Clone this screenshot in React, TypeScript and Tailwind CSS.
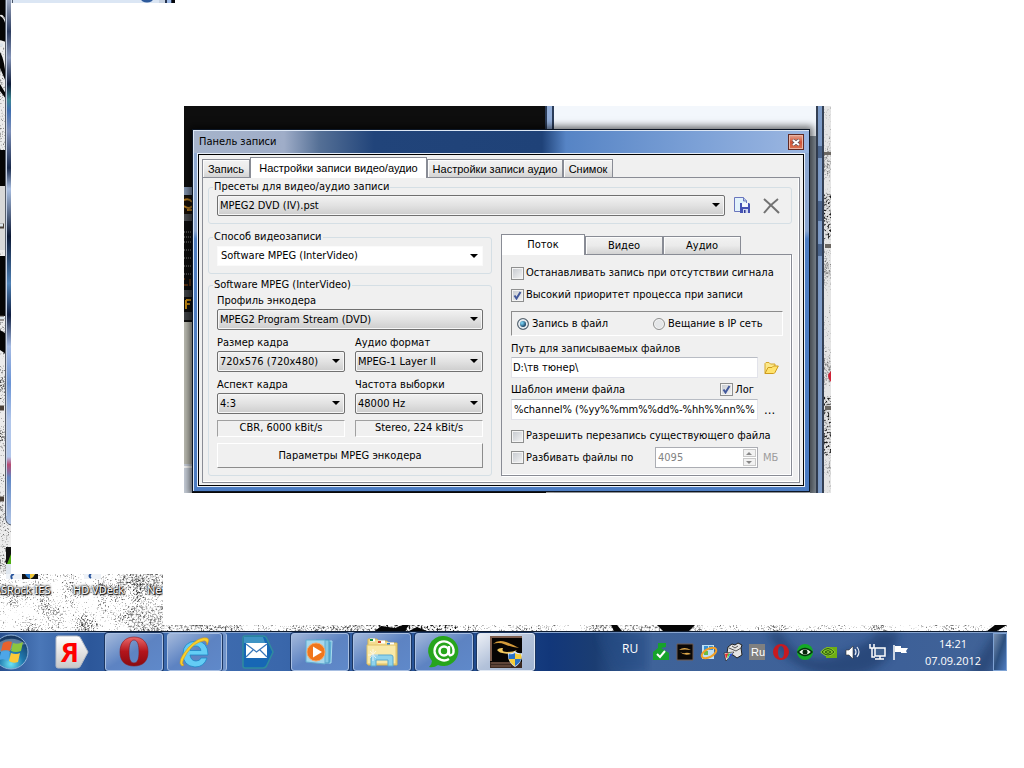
import { useState } from "react";
import type { ReactNode } from "react";

const uiFont = "font-['DejaVu_Sans_Condensed','DejaVu_Sans',sans-serif]";

/* ---------- Wallpaper ---------- */

function SpeckleFilters() {
  return (
    <svg className="absolute h-0 w-0" aria-hidden="true">
      <defs>
        <filter id="light-speckle" x="0" y="0" width="100%" height="100%" colorInterpolationFilters="sRGB">
          <feTurbulence type="fractalNoise" baseFrequency="0.6" numOctaves="2" seed="4" />
          <feColorMatrix values="1 0 0 0 0  1 0 0 0 0  1 0 0 0 0  0 0 0 0 1" result="fine" />
          <feTurbulence type="fractalNoise" baseFrequency="0.04" numOctaves="2" seed="7" />
          <feColorMatrix values="1 0 0 0 0  1 0 0 0 0  1 0 0 0 0  0 0 0 0 1" result="coarse" />
          <feComposite in="fine" in2="coarse" operator="arithmetic" k1="0" k2="0.6" k3="0.4" k4="0" />
          <feColorMatrix values="0 0 0 0 0.2  0 0 0 0 0.2  0 0 0 0 0.2  -4.5 0 0 0 2.1" />
        </filter>
        <filter id="dense-speckle" x="0" y="0" width="100%" height="100%" colorInterpolationFilters="sRGB">
          <feTurbulence type="fractalNoise" baseFrequency="0.5" numOctaves="3" seed="9" />
          <feColorMatrix values="0 0 0 0 0.1  0 0 0 0 0.1  0 0 0 0 0.1  -4 0 0 0 2.1" />
        </filter>
      </defs>
    </svg>
  );
}

function Wallpaper() {
  return (
    <>
      <svg className="absolute top-0 left-0" width="11" height="574" aria-hidden="true">
        <rect width="11" height="574" fill="#ececec" />
        <rect width="11" height="574" filter="url(#light-speckle)" />
        <path d="M0 0h6v20q-3-6-6-5zM0 16q5 2 6 12v14l-6-2zM0 52q5 8 6 30l-6-14zM0 84l6 10v5l-6-8zM0 150h6v36H0zM0 256h6v60H0zM0 330l6 4v20l-6-4z" fill="#050505" />
        <path d="M0 186h5v64H0z" fill="#d8d8d8" />
        <path d="M0 226h4M0 318h4M0 408h4M0 499h4" stroke="#4a4038" strokeWidth="5" />
        <path d="M0 45h3M0 225h3M0 318h4" stroke="#dce4ea" strokeWidth="3" />
        <defs>
          <linearGradient id="frame-glass" x1="0" y1="0" x2="0" y2="1">
            <stop offset="0" stopColor="#9aa6bf" />
            <stop offset=".06" stopColor="#2b3b5e" />
            <stop offset=".11" stopColor="#8494b8" />
            <stop offset=".16" stopColor="#0c1a38" />
            <stop offset=".19" stopColor="#3c8793" />
            <stop offset=".21" stopColor="#3d6cae" />
            <stop offset=".25" stopColor="#7d90ba" />
            <stop offset=".32" stopColor="#17284a" />
            <stop offset=".36" stopColor="#a9bfe2" />
            <stop offset=".45" stopColor="#0a1734" />
            <stop offset=".54" stopColor="#4d80b4" />
            <stop offset=".6" stopColor="#0e1d40" />
            <stop offset=".66" stopColor="#a5bbe4" />
            <stop offset=".73" stopColor="#6a93d4" />
            <stop offset=".8" stopColor="#b1c6ea" />
            <stop offset=".87" stopColor="#b1c6ea" />
            <stop offset=".885" stopColor="#b84a72" />
            <stop offset=".91" stopColor="#5f86c4" />
            <stop offset="1" stopColor="#b4c7e6" />
          </linearGradient>
        </defs>
        <path d="M5.500 0H11V525Q6 524 5.500 518Z" fill="url(#frame-glass)" />
        <path d="M5.500 0V518Q6 524 11 525" fill="none" stroke="#555c68" />
        <path d="M6.500 0V516" stroke="#c8d2e4" />
        <rect x="6" y="547" width="5" height="27" fill="#111" />
        <path d="M7 564l4-10v10z" fill="#4fae12" />
        <path d="M6 564h5v10H6z" fill="#dfe6ee" />
      </svg>

      <svg className="absolute top-0 left-[11px]" width="164" height="3" aria-hidden="true">
        <rect width="164" height="3" fill="#dbe6f4" />
        <rect x="1" width="1" height="3" fill="#4b5668" />
        <rect x="148" width="6" height="3" fill="#c9d4e3" />
        <ellipse cx="136" cy="-1" rx="6" ry="3.500" fill="#2e5a9b" />
        <rect x="154" width="8" height="3" fill="#26344f" />
        <rect x="156" width="4" height="3" fill="#a0bdea" />
        <rect x="161" width="3" height="3" fill="#05080c" />
      </svg>

      <svg className="absolute top-[574px] left-0" width="163" height="57" aria-hidden="true">
        <rect width="163" height="57" fill="#fff" />
        <rect width="163" height="57" filter="url(#light-speckle)" />
        <svg x="118" width="45" height="16"><rect width="45" height="16" filter="url(#dense-speckle)" opacity=".6" /></svg>
        <svg x="128" y="32" width="35" height="25"><rect width="35" height="25" filter="url(#dense-speckle)" opacity=".5" /></svg>
        <path d="M6 0h32v5H6zM84 0h17v5H84z" fill="#eef2f7" />
        <path d="M14 0q-4 1-2 5M91 0q-3 2 0 4" fill="none" stroke="#27539b" strokeWidth="2" />
        <rect x="22" width="16" height="5" fill="#111" />
        <path d="M25 0h10q-1 3-5 5-4-2-5-5z" fill="#2673c5" />
        <path d="M30 0h5q-1 3-5 5z" fill="#f2c838" />
      </svg>

      <div className="absolute top-[583px] left-0 h-4 w-[163px] overflow-hidden font-['Noto_Sans',sans-serif] text-[11px] leading-[14px] whitespace-nowrap text-white [text-shadow:0_0_2px_#000,1px_1px_1px_#000,0_0_3px_#000]">
        <span className="absolute top-0 -left-[6px]">ASRock IES</span>
        <span className="absolute top-0 left-[73px]">HD VDeck</span>
        <span className="absolute top-0 left-[147px]">Net</span>
      </div>

      <div className="absolute top-[625px] right-[17px] left-[163px] h-[6px] overflow-hidden">
        <svg width="100%" height="6" aria-hidden="true">
          <rect width="100%" height="6" fill="#fff" />
          <rect width="100%" height="6" filter="url(#light-speckle)" />
          <rect width="80" height="6" filter="url(#dense-speckle)" opacity=".7" />
          <rect x="150" width="90" height="6" filter="url(#dense-speckle)" opacity=".7" />
          <rect x="215" width="80" height="6" filter="url(#dense-speckle)" />
          <rect x="430" width="110" height="6" filter="url(#dense-speckle)" opacity=".6" />
          <path d="M212 6l6-5 14 2 8-3h6l-4 6zM246 6l8-4 10 4zM448 0h6l5 6h-8zM494 0h38l-6 6h-26zM668 0h12l-6 6h-12z" transform="translate(159 0)" opacity="0" />
          <path d="M212 6l6-5 14 2 8-3h6l-4 6zM246 6l8-4 10 4zM448 0h6l5 6h-8zM494 0h38l-6 6h-26zM832 0h12l-10 6h-10z" fill="#060606" />
        </svg>
      </div>
    </>
  );
}

/* ---------- Form parts ---------- */

type ComboProps = { id: string; label?: string; value: string; flat?: boolean; className?: string };

function Combo({ id, label, value, flat, className = "" }: ComboProps) {
  const skin = flat
    ? "h-5 border-[#fafafa] bg-white pl-[3px]"
    : "h-[21px] rounded-[2px] border-[#707070] bg-linear-to-b from-[#f2f2f2] via-[#e2e2e2] via-50% to-[#cdcdcd] pl-[2px] shadow-[inset_0_0_0_1px_#f6f6f6]";
  return (
    <div className={`relative ${className}`}>
      <select id={id} aria-label={label} className={`block w-full appearance-none border pr-5 outline-none ${skin}`}>
        <option>{value}</option>
      </select>
      <svg className="pointer-events-none absolute top-[8px] right-[5px]" width="8" height="4" aria-hidden="true">
        <path d="M0 0h8L4 4z" fill="#000" />
      </svg>
    </div>
  );
}

function Field({ id, label, value }: { id: string; label: string; value: string }) {
  return (
    <div>
      <label htmlFor={id} className="block h-[15px]">{label}</label>
      <Combo id={id} value={value} />
    </div>
  );
}

function Group({ title, className, children }: { title: string; className: string; children: ReactNode }) {
  return (
    <fieldset className={`min-w-0 rounded-[3px] border border-[#d5dfe5] px-2 ${className}`}>
      <legend className="-ml-1 h-[14px] px-px">{title}</legend>
      {children}
    </fieldset>
  );
}

function Check({ label, checked = false }: { label: string; checked?: boolean }) {
  return (
    <label className="flex h-[14px] items-center gap-[2px] whitespace-nowrap">
      <span className="relative block h-[13px] w-[13px]">
        <input
          type="checkbox"
          defaultChecked={checked}
          className="peer block h-[13px] w-[13px] appearance-none border border-[#8e8f8f] bg-linear-to-br from-[#c4c8ce] to-[#f6f6f6] shadow-[inset_0_0_0_1px_#f4f4f4]"
        />
        <svg className="pointer-events-none absolute top-[2px] left-[2px] hidden peer-checked:block" width="9" height="9" aria-hidden="true">
          <path d="M1.500 4.500L3.500 7.500L7.500 1" fill="none" stroke="#42589b" strokeWidth="2" />
        </svg>
      </span>
      {label}
    </label>
  );
}

function Radio({ label, checked = false, className = "" }: { label: string; checked?: boolean; className?: string }) {
  return (
    <label className={`flex items-center gap-[3px] whitespace-nowrap ${className}`}>
      <input
        type="radio"
        name="target"
        defaultChecked={checked}
        className="h-3 w-3 appearance-none rounded-full border border-[#8e8f8f] bg-[#e4e6e8] shadow-[inset_0_0_0_1px_#f6f6f6] checked:border-[#5c6770] checked:bg-radial-[at_40%_40%] checked:from-[#6fc3e6] checked:from-10% checked:to-[#123a5c] checked:to-50% checked:shadow-[inset_0_0_0_2px_#e6eaee]"
      />
      {label}
    </label>
  );
}

const tabSkin = "border border-b-0 border-[#898c95] shrink-0 whitespace-nowrap text-center";
const idleTab = "bg-linear-to-b from-[#f2f2f2] via-[#ebebeb] via-50% to-[#d3d3d3] shadow-[inset_1px_1px_0_#fcfcfc]";
const sunken = "h-[17px] border border-t-[#a0a0a0] border-r-white border-b-white border-l-[#a0a0a0] text-center leading-[14px]";
const textBox = "h-[21px] w-[247px] border border-t-[#b8bcc4] border-r-[#e2e3ea] border-b-[#e2e3ea] border-l-[#e2e3ea] bg-white outline-none";

/* ---------- Recording settings ---------- */

function EncoderColumn() {
  return (
    <div className="flex w-[284px] flex-col gap-1">
      <Group title="Способ видеозаписи" className="h-[44px] pt-[2px]">
        <Combo id="method" label="Способ видеозаписи" value="Software MPEG (InterVideo)" flat />
      </Group>
      <Group title="Software MPEG (InterVideo)" className="pt-[2px] pb-[7px]">
        <div className="flex flex-col gap-[6px]">
          <Field id="profile" label="Профиль энкодера" value="MPEG2 Program Stream (DVD)" />
          <div className="grid grid-cols-2 gap-x-[10px] gap-y-[6px]">
            <Field id="frame" label="Размер кадра" value="720x576 (720x480)" />
            <Field id="audio" label="Аудио формат" value="MPEG-1 Layer II" />
            <Field id="aspect" label="Аспект кадра" value="4:3" />
            <Field id="rate" label="Частота выборки" value="48000 Hz" />
            <div className={sunken}>CBR, 6000 kBit/s</div>
            <div className={sunken}>Stereo, 224 kBit/s</div>
          </div>
          <button type="button" className="h-[25px] border border-t-white border-r-[#8c8c8c] border-b-[#8c8c8c] border-l-white">
            Параметры MPEG энкодера
          </button>
        </div>
      </Group>
    </div>
  );
}

function FolderIcon() {
  return (
    <svg width="15" height="14" viewBox="0 0 15 14" aria-hidden="true">
      <path d="M1 12.500V2.500L2 1.500H5L6.500 3H11V5.500" fill="#fbe88a" stroke="#d5a62c" />
      <path d="M1 12.500L4 6.500H8L9.500 5H14.300L11 11.500Q10.500 12.500 9.500 12.500Z" fill="#ffe36d" stroke="#cf9c1e" />
    </svg>
  );
}

function StreamColumn() {
  const [tab, setTab] = useState("Поток");
  return (
    <div className="mt-1 flex min-w-0 flex-1 flex-col">
      <div className="flex h-5 items-end" role="tablist">
        {["Поток", "Видео", "Аудио"].map((name) => (
          <button
            key={name}
            type="button"
            role="tab"
            aria-selected={tab === name}
            onClick={() => setTab(name)}
            className={`${tabSkin} ${tab === name ? "z-10 -mb-px h-[21px] w-[84px] bg-white" : `${idleTab} h-[18px] w-[78px]`}`}
          >
            {name}
          </button>
        ))}
      </div>
      <div className="flex-1 border border-[#898c95] pt-[11px] pr-2 pl-[9px] shadow-[inset_-1px_-1px_0_#fff,1px_1px_0_#fff]">
        <Check label="Останавливать запись при отсутствии сигнала" />
        <div className="mt-2">
          <Check label="Высокий приоритет процесса при записи" checked />
        </div>
        <div className="mt-[9px] flex h-[25px] border border-t-[#8c8c8c] border-r-white border-b-white border-l-[#8c8c8c] pl-[5px]">
          <Radio label="Запись в файл" checked className="w-[136px]" />
          <Radio label="Вещание в IP сеть" />
        </div>
        <label htmlFor="path" className="mt-[6px] block h-[15px]">Путь для записываемых файлов</label>
        <div className="flex items-center gap-[6px]">
          <input id="path" defaultValue="D:\тв тюнер\" className={`${textBox} px-px`} />
          <button type="button" aria-label="Выбрать папку"><FolderIcon /></button>
        </div>
        <div className="mt-[3px] flex h-[17px] w-[243px] items-center justify-between">
          <label htmlFor="template">Шаблон имени файла</label>
          <Check label="Лог" checked />
        </div>
        <div className="mt-px flex items-center gap-[6px]">
          <input id="template" defaultValue="%channel% (%yy%%mm%%dd%-%hh%%nn%%ss%)" className={`${textBox} px-[2px]`} />
          <button type="button" aria-label="Изменить шаблон" className="text-[13px]">...</button>
        </div>
        <div className="mt-[9px]">
          <Check label="Разрешить перезапись существующего файла" />
        </div>
        <div className="mt-[4px] flex h-[21px] items-center">
          <div className="w-[144px]"><Check label="Разбивать файлы по" /></div>
          <div className="flex h-[21px] w-[103px] items-center border border-[#abadb3] bg-white pr-px">
            <input aria-label="Размер файла, МБ" defaultValue="4095" disabled className="h-[19px] w-0 flex-1 bg-transparent pl-[2px] text-[#838383] outline-none" />
            <div className="flex flex-col gap-px">
              {["M2 5h6L5 2z", "M2 2h6L5 5z"].map((d, i) => (
                <button key={d} type="button" disabled aria-label={i ? "Меньше" : "Больше"} className="h-[8px] w-[13px] border border-[#c9c9c9] bg-[#f2f2f2]">
                  <svg width="10" height="6" className="block" aria-hidden="true"><path d={d} fill="#888" /></svg>
                </button>
              ))}
            </div>
          </div>
          <span className="pl-[5px] text-[#9c9c9c]">МБ</span>
        </div>
      </div>
    </div>
  );
}

function SaveIcon() {
  return (
    <svg width="17" height="17" viewBox="0 0 17 17" aria-hidden="true">
      <path d="M.5 .5H9.500L12.500 3.500V14.500H.5Z" fill="#e2f2fb" stroke="#6a76bd" />
      <path d="M9.500 .5V4H13" fill="#b9c8ea" stroke="#6a76bd" />
      <path d="M6 6H15L16 7V16H6Z" fill="#4451b4" />
      <path d="M8 6H14V10H8Z" fill="#f3f6fd" />
      <path d="M9 12H14V16H9Z" fill="#cfd6ee" />
      <path d="M10 13H11.500V16H10Z" fill="#2f3a94" />
    </svg>
  );
}

const outerTabs = [
  { name: "Запись", width: "w-[48px]" },
  { name: "Настройки записи видео/аудио", width: "w-[177px]" },
  { name: "Настройки записи аудио", width: "w-[136px]" },
  { name: "Снимок", width: "w-[50px]" },
];

function RecordDialog() {
  const [tab, setTab] = useState(1);
  return (
    <section
      aria-label="Панель записи"
      className={`absolute top-[23px] left-[8px] w-[618px] border border-[#0b1524] bg-[#5580c0] text-[11px] leading-[14px] text-black shadow-[0_0_7px_3px_rgba(0,0,0,0.55)] ${uiFont}`}
    >
      <div className="border-t border-l border-[#dce7f5] bg-[linear-gradient(to_bottom,#8fa9d0_0,#8ba6d0_100px,#4f7fc4_108px,#4c7cc2_100%)] pr-[4px] pb-[4px] pl-[3px]">
        <header className="-mr-[4px] -ml-[3px] flex h-[22px] items-center justify-between bg-[linear-gradient(to_right,#a5b3ca_0,#9fadc8_90px,#557096_125px,#21447a_180px,#1f4278_348px,#5684c5_372px,#7ba0d6_500px,#98b4e0_600px)] pr-[5px] pl-[5px]">
          <h1>Панель записи</h1>
          <button type="button" aria-label="Закрыть" className="grid h-[16px] w-[16px] place-items-center border border-[#5f2a26] bg-linear-to-b from-[#e4a794] via-[#cf5136] via-50% to-[#d87352] shadow-[inset_0_0_0_1px_#eab5a5]">
            <svg width="8" height="7" aria-hidden="true">
              <path d="M1 1l6 5M7 1L1 6" stroke="#4b4f5c" strokeWidth="3" />
              <path d="M1 1l6 5M7 1L1 6" stroke="#fff" strokeWidth="2" />
            </svg>
          </button>
        </header>
        <div className="border border-[#e8eff8] bg-black p-px">
          <div className="bg-[#f0f0f0] px-[3px] pt-[2px] pb-[2px]">
            <div className="flex h-5 items-end font-['Liberation_Sans',sans-serif]" role="tablist">
              {outerTabs.map((t, i) => (
                <button
                  key={t.name}
                  type="button"
                  role="tab"
                  aria-selected={tab === i}
                  onClick={() => setTab(i)}
                  className={`${tabSkin} ${t.width} ${tab === i ? "z-10 -mb-px h-[21px] bg-white" : `${idleTab} h-[18px]`}`}
                >
                  {t.name}
                </button>
              ))}
            </div>
            <div className="border border-[#898c95] pt-[2px] pr-[7px] pb-[6px] pl-[5px] shadow-[inset_-1px_-1px_0_#fff]">
              <Group title="Пресеты для видео/аудио записи" className="h-[44px] pt-[1px]">
                <div className="flex items-center">
                  <Combo id="preset" label="Пресеты" value="MPEG2 DVD (IV).pst" className="w-[508px]" />
                  <button type="button" aria-label="Сохранить пресет" className="ml-[9px]"><SaveIcon /></button>
                  <button type="button" aria-label="Удалить пресет" className="ml-[12px]">
                    <svg width="17" height="16" aria-hidden="true">
                      <path d="M1 1Q8 7 16 15M15 1Q7 7 1 15" fill="none" stroke="#727272" strokeWidth="2" />
                    </svg>
                  </button>
                </div>
              </Group>
              <div className="mt-[6px] flex gap-[9px]">
                <EncoderColumn />
                <StreamColumn />
              </div>
            </div>
          </div>
        </div>
      </div>
    </section>
  );
}

function WindowStack() {
  return (
    <div className="absolute top-[106px] left-[184px] h-[387px] w-[647px] overflow-hidden">
      <svg className="absolute top-0 left-0" width="647" height="387" aria-hidden="true">
        <rect width="362" height="387" fill="#0e0e0e" />
        <path d="M0 81h8v8H0z" fill="#7f91ac" />
        <path d="M0 90h8v18H0z" fill="#181008" />
        <path d="M0 94q5-2 8 2M0 100q6 4 8 0M3 104h5" fill="none" stroke="#b17a22" strokeWidth="2" />
        <path d="M0 108h8v7H0z" fill="#4b4d50" />
        <path d="M0 126h8M0 131h8M0 136h8M0 144h8M0 152h8M0 160h8M0 168h8" stroke="#8b8b8b" strokeDasharray="1 1" />
        <path d="M0 179h4M0 173h1M6 173v7" stroke="#9a4e12" strokeWidth="1" />
        <path d="M0 184h8v7H0zM0 206h8v8H0z" fill="#3f4245" />
        <path d="M2 194h5M2 194v9M2 198h4" stroke="#c58a13" strokeWidth="2" />
        <path d="M0 216h8v142H0z" fill="#bdbdb3" />
        <path d="M0 358h8v29H0z" fill="#c9d0da" />
        <path d="M0 361h8" stroke="#f8f8f8" strokeWidth="2" />
        <rect x="361" width="10" height="60" fill="#2b3c58" />
        <rect x="363" width="5" height="60" fill="#93aed8" />
        <rect x="370" width="263" height="387" fill="#f3f7fc" />
        <rect x="626" y="30" width="7" height="357" fill="#828c96" />
        <rect x="632" width="8" height="387" fill="#344054" />
        <rect x="634" width="4" height="387" fill="#7e9cc8" />
        <path d="M634 40h4v12h-4zM634 95h4v20h-4zM634 138h4v12h-4z" fill="#2c4268" opacity=".6" />
        <rect x="640" width="7" height="387" fill="#e4e4e4" />
        <rect x="640" width="7" height="387" filter="url(#light-speckle)" opacity=".6" />
        <rect x="640" y="88" width="7" height="45" filter="url(#dense-speckle)" />
        <rect x="640" y="290" width="7" height="60" filter="url(#dense-speckle)" />
        <path d="M647 265q-6 5 0 11z" fill="#cf2236" />
        <path d="M640 46h7v3h-7zM641 138h6v4h-6zM641 300h6v4h-6z" fill="#6b6762" />
      </svg>
      <RecordDialog />
    </div>
  );
}

/* ---------- Taskbar ---------- */

function TaskButton({ label, tone = "open", children }: { label: string; tone?: "open" | "active" | "pinned" | "stacked"; children: ReactNode }) {
  const skins = {
    open: "border border-[#a8bfe2] bg-linear-to-br from-[#a4b9db] via-[#5d83c2] via-50% to-[#5f89ca] shadow-[0_0_0_1px_#1b3560]",
    active: "border border-[#e0e8f3] bg-linear-to-br from-[#eceff5] via-[#b3c2da] via-50% to-[#9fb3d1] shadow-[0_0_0_1px_#1b3560]",
    stacked: "mr-[3px] border border-[#a8bfe2] bg-linear-to-br from-[#a4b9db] via-[#5d83c2] via-50% to-[#5f89ca] shadow-[1px_0_0_#1b3560,4px_0_0_#6f92c8,5px_0_0_#a8bfe2]",
    pinned: "",
  };
  return (
    <button
      type="button"
      aria-label={label}
      className={`grid h-[38px] shrink-0 place-items-center rounded-[3px] ${tone === "stacked" ? "w-[55px]" : "w-[58px]"} ${skins[tone]}`}
    >
      {children}
    </button>
  );
}

function EyeFace() {
  return (
    <>
      <path d="M4 9Q9 4 17 7T30 13Q22 12 16 9.500T4 9Z" fill="#d39a3a" />
      <path d="M8 15Q10 12.500 14 13Q12 17 18 17Q24 17 28 15Q23 20 16 18.500Q10 18 8 15Z" fill="#f0c65c" />
    </>
  );
}

function Taskbar() {
  return (
    <footer className="relative mr-[17px] flex h-10 justify-between overflow-hidden border-t border-[#0d1b30] bg-[linear-gradient(to_right,#274f8f_0,#4a77b8_40px,#2c579a_90px,#3f6db0_180px,#3a67ab_280px,#1f4a8e_480px,#12377a_550px,#1b3d72_595px,#3f6399_640px,#3d6098_900px,#416397_1007px)] shadow-[inset_0_1px_0_#8aa6cf]">
      <svg className="absolute top-0 right-0" width="480" height="40" aria-hidden="true">
        <defs>
          <filter id="glass-blur"><feGaussianBlur stdDeviation="4" /></filter>
        </defs>
        <path d="M254 0q20 38 60 22t34-22h24q-10 46-60 44T240 0zM440 44l28-44h12l-20 44z" fill="#12305f" opacity=".5" filter="url(#glass-blur)" />
        <path d="M70 0h50v40h-30z" fill="#244a82" opacity=".6" filter="url(#glass-blur)" />
      </svg>
      <nav aria-label="Панель задач" className="relative flex gap-1 pt-px">
        <button type="button" aria-label="Пуск" className="w-[39px]">
          <svg width="39" height="38" aria-hidden="true">
            <defs>
              <radialGradient id="orb" cx=".5" cy=".85" r=".8">
                <stop offset="0" stopColor="#6ee4f5" />
                <stop offset=".45" stopColor="#1f78ae" />
                <stop offset="1" stopColor="#18365f" />
              </radialGradient>
            </defs>
            <circle cx="11" cy="19" r="17" fill="url(#orb)" stroke="#8fb3d9" />
            <path d="M-4 12Q10 0 26 11Q14 12 9 19H-4z" fill="#fff" opacity=".3" />
            <path d="M3 10q5-3 9-1l-2 9q-4-2-9 0z" fill="#e8612c" />
            <path d="M13 10q5 2 10-1l-2 9q-5 2-10 0z" fill="#8cc63e" />
            <path d="M1 19q5-2 9 0l-2 9q-4-3-9-1z" fill="#4da6e8" />
            <path d="M11 20q5 2 9 0l-2 9q-5 2-9-1z" fill="#fcc938" />
          </svg>
        </button>
        <TaskButton label="Яндекс" tone="pinned">
          <svg width="34" height="34" viewBox="0 0 34 34" aria-hidden="true">
            <defs>
              <linearGradient id="silver" x1="0" y1="0" x2="0" y2="1"><stop offset="0" stopColor="#fff" /><stop offset="1" stopColor="#c9c9c9" /></linearGradient>
            </defs>
            <path d="M3 1H22Q25 1 26 4L33 17L26 30Q25 33 22 33H3Q1 33 1 31V3Q1 1 3 1Z" fill="url(#silver)" stroke="#b6bcc6" />
            <text x="6" y="27" fontFamily="Open Sans, Liberation Sans, sans-serif" fontWeight="bold" fontSize="27" fill="#f00">Я</text>
          </svg>
        </TaskButton>
        <TaskButton label="Opera">
          <svg width="30" height="32" viewBox="0 0 30 32" aria-hidden="true">
            <defs><linearGradient id="opera" x1="0" y1="0" x2="0" y2="1"><stop offset="0" stopColor="#e9696b" /><stop offset=".5" stopColor="#b3151b" /><stop offset="1" stopColor="#8a0a10" /></linearGradient></defs>
            <path fillRule="evenodd" d="M15 1C6 1 1 7 1 16s5 14 14 14 14-5 14-14S24 1 15 1zM15 4c4 0 5 6 5 12s-1 11-5 11-5-5-5-11 1-12 5-12z" fill="url(#opera)" stroke="#8c1419" strokeWidth=".6" />
          </svg>
        </TaskButton>
        <TaskButton label="Internet Explorer" tone="stacked">
          <svg width="32" height="34" viewBox="0 0 32 34" aria-hidden="true">
            <path fillRule="evenodd" d="M29 20H11q1 6 6 6 4 0 5-3h6q-3 9-12 9Q4 31 4 19T17 6q12 0 12 14zM11 15.500h11q-1-4.500-5.500-4.500t-5.500 4.500z" fill="#64cdf5" stroke="#1e86c5" strokeWidth=".8" />
            <path d="M3 31Q-3 27 9 13Q20 1 28 3Q31 4 28 10Q28 5 24 6Q16 7 8 18Q1 29 5 30z" fill="#fad02c" stroke="#d89b12" strokeWidth=".6" />
          </svg>
        </TaskButton>
        <TaskButton label="Почта" tone="pinned">
          <svg width="32" height="34" viewBox="0 0 32 34" aria-hidden="true">
            <path d="M3 1H21Q24 1 25 4L31 17L25 30Q24 33 21 33H3Q1 33 1 31V3Q1 1 3 1Z" fill="#1767b5" stroke="#2f8c9e" strokeWidth="1.500" />
            <path d="M2 2h19l2 6H2z" fill="#3f94c4" />
            <path d="M4 8H25V23H4Z" fill="#fff" />
            <path d="M4 9L14.500 17L25 9M4 22L11 15M25 22L18 15" fill="none" stroke="#3876b9" strokeWidth="1.200" />
          </svg>
        </TaskButton>
        <TaskButton label="Windows Media Player">
          <svg width="30" height="28" viewBox="0 0 30 28" aria-hidden="true">
            <path d="M16 3h11l-1 22H16z" fill="#5fb0d4" stroke="#a8dcef" />
            <path d="M11 2h13v23H11z" fill="#86c8e2" stroke="#4a98c3" />
            <path d="M1 2h19v24L1 24z" fill="#a4d7ec" stroke="#63abd0" />
            <circle cx="11" cy="14" r="9" fill="#f0761b" stroke="#f9a663" />
            <path d="M8 8.500L17 14L8 19.500Z" fill="#fff" />
          </svg>
        </TaskButton>
        <TaskButton label="Проводник">
          <svg width="34" height="32" viewBox="0 0 34 32" aria-hidden="true">
            <path d="M3 3h9l2 2h8l1 2h9v22H3z" fill="#f3dc8f" stroke="#d7b650" />
            <path d="M5 4h5M13 6h7M22 8h7" stroke="#fff" strokeWidth="3" />
            <path d="M5 4h3" stroke="#199443" strokeWidth="2" />
            <path d="M13 6h3" stroke="#d13d27" strokeWidth="2" />
            <path d="M22 8h3" stroke="#2b80d6" strokeWidth="2" />
            <path d="M2 9h29v19H2z" fill="#f9e9a9" stroke="#e0c267" />
            <path d="M6 30V21q0-2 2-2h18q2 0 2 2v9h-5v-6H11v6z" fill="#8fd3ec" stroke="#5aa9cf" />
            <path d="M8 13v12M3 19h10M5 15l6 7M11 15l-6 7" stroke="#fff" opacity=".7" />
          </svg>
        </TaskButton>
        <TaskButton label="Mail.Ru Агент">
          <svg width="32" height="32" viewBox="0 0 32 32" aria-hidden="true">
            <path d="M16 0a15 15 0 1 1-6 29Q6 32 1 31Q4 28 4 25A15 15 0 0 1 16 0Z" fill="#27a51c" />
            <circle cx="16" cy="15" r="4.500" fill="none" stroke="#fff" strokeWidth="2.600" />
            <path d="M21 10v7q0 3 2.500 2Q26 18 25.500 14A9.500 9.500 0 1 0 21 23" fill="none" stroke="#fff" strokeWidth="2.400" />
          </svg>
        </TaskButton>
        <TaskButton label="ТВ тюнер" tone="active">
          <svg width="34" height="34" viewBox="0 0 34 34" aria-hidden="true">
            <rect x="1" y="1" width="32" height="32" fill="#060403" />
            <path d="M1 1h32v2H3v23H1z" fill="#7a5a4a" />
            <path d="M1 27h32v6H1z" fill="#3c2a22" />
            <path d="M2 28h20M2 31h20" stroke="#806050" />
            <EyeFace />
            <path d="M26 16q3 3 7 2 1 9-7 14-8-5-7-14 4 1 7-2z" fill="#dbe5ef" />
            <path d="M26 18v6h-6q-1-3 0-5 3 1 6-1zM26 24h6q-1 4-6 7z" fill="#2772c9" />
            <path d="M26 18q3 2 6 1 1 3 0 5h-6zM20 24h6v7q-5-3-6-7z" fill="#f6ce3a" />
          </svg>
        </TaskButton>
      </nav>
      <div className="relative flex items-center pt-px font-['Open_Sans',sans-serif] text-[11px] text-white">
        <span className="mr-[9px] mb-[7px] w-[18px] text-[12px] leading-[14px]">RU</span>
        <svg width="264" height="20" viewBox="0 0 264 20" role="img" aria-label="Область уведомлений">
          <path d="M4 10l5-4V1h8v4l-5 1 8 5v7H4z" fill="#17a32b" />
          <path d="M8 12l3 3 5-6" fill="none" stroke="#fff" strokeWidth="2" />
          <path d="M28 2h16v16H28z" fill="#0b0806" stroke="#6e5a50" />
          <path d="M30 8q5-4 12 0-6-1-12 0zM31 10q4 4 11 2-3-2-6-1-1 1-5-1z" fill="#e0a94a" />
          <path d="M53 3h12v14H53z" fill="#bfe0f5" />
          <path d="M55 4h4v4h-4zM60 4h4v4h-4z" fill="#3a93d5" />
          <path d="M55 9h4v4h-4z" fill="#6cbb45" />
          <ellipse cx="60" cy="11" rx="8" ry="4" transform="rotate(-28 60 11)" fill="none" stroke="#f3a127" strokeWidth="2" />
          <path d="M79 5l4-3 3 1 3-2 4 2-1 3 1 7-5 3-4-3-6-2z" fill="#e4e4e4" stroke="#222" />
          <path d="M80 6l7 3 5-3M83 4l3 2 3-2" fill="none" stroke="#555" />
          <path d="M75 11l10-1-8 9z" fill="#fff" stroke="#111" strokeWidth=".6" />
          <path d="M76 12l4-1-3 6z" fill="#e83030" />
          <path d="M79 12l3-1-4 6z" fill="#3ccf4a" />
          <path d="M81 12l3-1-5 7z" fill="#2c52e0" />
          <rect x="100" y="2" width="16" height="16" fill="#808080" />
          <text x="102" y="14" fontFamily="Liberation Sans, sans-serif" fontSize="11" fill="#fff">Ru</text>
          <path fillRule="evenodd" d="M132 2a8 8 0 1 0 0 16 8 8 0 1 0 0-16zM132 4q3 0 3 6t-3 6-3-6 3-6z" fill="#c71a20" />
          <circle cx="156" cy="10" r="8" fill="#14a928" />
          <path d="M149 10q7-7 14 0-7 7-14 0z" fill="#f2fff0" stroke="#04330a" strokeWidth="1.500" />
          <circle cx="156" cy="10" r="2.500" fill="#06260a" />
          <path d="M177 5h11v11h-11z" fill="#6fae14" />
          <path d="M173 10q6-7 12 0-6 6-12 0zM176 10q3-3 6 0-3 3-6 0z" fill="none" stroke="#86c62a" strokeWidth="2.500" />
          <path d="M173 10q6-7 12 0-6 6-12 0zM176 10q3-3 6 0-3 3-6 0z" fill="none" stroke="#2c5a10" strokeWidth="1" />
          <path d="M197 8h3l4-4v13l-4-4h-3z" fill="#fff" stroke="#333" strokeWidth=".6" />
          <path d="M206 7q2 3 0 6M208 5q4 5 0 10" fill="none" stroke="#e9eef6" strokeWidth="1.200" />
          <path d="M226 6h10v8h-10z" fill="#40618f" stroke="#fff" strokeWidth="1.500" />
          <path d="M226 17h9M231 14v3M221 2v4h4V2M223 6v9h3" fill="none" stroke="#fff" strokeWidth="1.500" />
          <path d="M245 3v15" stroke="#fff" strokeWidth="1.500" />
          <path d="M246 4h6v2h7l-2 3 1 2h-6v-1h-6z" fill="#fff" />
        </svg>
        <time className="w-[80px] pb-px text-center leading-[17px]" dateTime="2012-09-07T14:21">
          14:21<br />07.09.2012
        </time>
        <button type="button" aria-label="Свернуть все окна" className="h-[38px] w-[14px] border border-[#7fa3d4] bg-linear-to-br from-[#7a90af] via-[#2d507f] to-[#4f7cc0]" />
      </div>
    </footer>
  );
}

export default function App() {
  return (
    <div className="min-h-screen w-full overflow-hidden bg-white">
      <SpeckleFilters />
      <main className="relative h-[631px]">
        <Wallpaper />
        <WindowStack />
      </main>
      <Taskbar />
    </div>
  );
}
